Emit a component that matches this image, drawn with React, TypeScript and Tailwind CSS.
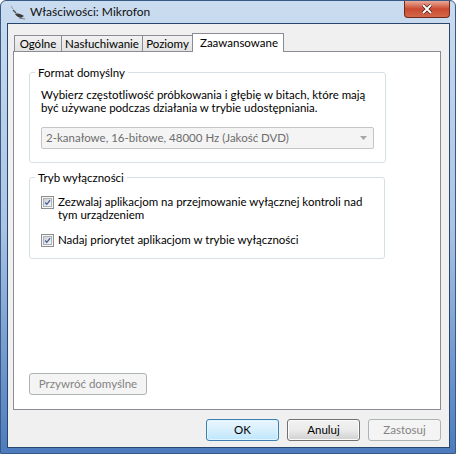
import React from "react";

function CheckBox() {
  return (
    <span className="mt-[1px] flex h-[13px] w-[13px] shrink-0 items-center justify-center border border-[#8e8f8f] bg-[#f4f4f4]">
      <span className="flex h-[9px] w-[9px] items-center justify-center border border-[#aeb3b9] bg-gradient-to-br from-[#cbcfd5] to-[#f6f6f6]">
        <svg width="9" height="9" viewBox="0 0 9 9">
          <path d="M1.5 4.5 L3.6 6.8 L7.8 1.6" fill="none" stroke="#4a5f97" strokeWidth="1.6" />
        </svg>
      </span>
    </span>
  );
}

function Group({ title, children }: { title: string; children: React.ReactNode }) {
  return (
    <fieldset className="w-[356px] rounded-[3px] border border-[#d5dfe5]">
      <legend className="ml-[5px] px-[3px] leading-[15px]">{title}</legend>
      {children}
    </fieldset>
  );
}

function Tab({ label, width, active }: { label: string; width: string; active?: boolean }) {
  if (active) {
    return (
      <div className={`relative z-10 -mb-[1px] -ml-[1px] h-[19px] border border-b-0 border-[#898c95] bg-white pl-[7px] pt-[1px] leading-[15px] ${width}`}>
        {label}
      </div>
    );
  }
  return (
    <div className={`-ml-[1px] h-[16px] border border-b-0 border-[#898c95] bg-gradient-to-b from-[#f2f2f2] to-[#e3e3e3] text-center leading-[15px] first:ml-0 ${width}`}>
      {label}
    </div>
  );
}

export default function App() {
  return (
    <div
      className="flex h-[454px] w-[456px] flex-col overflow-hidden rounded-t-[6px] border border-[#3a5a86] bg-gradient-to-b from-[#cadcef] via-[#a9c4e4] to-[#4c7bbd] text-[11.5px] text-black"
      style={{ fontFamily: "Lato, 'Noto Sans', sans-serif" }}
    >
      {/* title bar */}
      <div className="flex h-[22px] shrink-0 items-start">
        <div className="ml-[9px] mt-[4px] h-[16px] w-[16px]">
          <svg width="16" height="16" viewBox="0 0 16 16">
            <path d="M1 1 L3 4" stroke="#9a9a9a" strokeWidth="1" />
            <path d="M3 5 L6 8" stroke="#555" strokeWidth="1.4" />
            <path d="M5 9 C8 8 11 9 14 11 L11 13 C8 12 6 11 5 9 Z" fill="#3c3c3c" />
            <path d="M9 13 L15 14" stroke="#7a7a7a" strokeWidth="1" />
          </svg>
        </div>
        <div className="ml-[4px] mt-[3px] text-[12px] leading-[15px] text-[#111]">Właściwości: Mikrofon</div>
        <div className="ml-auto mr-[5px] flex h-[17px] w-[46px] items-center justify-center rounded-b-[4px] border border-t-0 border-[#6e2a1f] bg-gradient-to-b from-[#e9a899] via-[#c9492f] to-[#d4684c]">
          <svg width="12" height="10" viewBox="0 0 12 10">
            <path d="M2 1 L10 9 M10 1 L2 9" stroke="#3a1510" strokeWidth="3.2" />
            <path d="M2 1 L10 9 M10 1 L2 9" stroke="#ffffff" strokeWidth="2" />
          </svg>
        </div>
      </div>

      <div className="flex min-h-0 flex-1">
        <div className="w-[6px] shrink-0" />
        {/* client area */}
        <div className="flex flex-1 flex-col border border-[#29466e] bg-[#f0f0f0] pb-[6px] pl-[5px] pr-[8px] pt-[8px]">
          <div className="flex h-[19px] items-end pl-[1px]">
            <Tab label="Ogólne" width="w-[48px]" />
            <Tab label="Nasłuchiwanie" width="w-[82px]" />
            <Tab label="Poziomy" width="w-[51px]" />
            <Tab label="Zaawansowane" width="w-[92px]" active />
          </div>
          <div className="flex h-[360px] flex-col border border-[#898c95] bg-white px-[15px] pb-[14px] pt-[13px]">
            <Group title="Format domyślny">
              <div className="px-[11px] pb-[13px] pt-[8px]">
                <p className="leading-[13px]">
                  Wybierz częstotliwość próbkowania i głębię w bitach, które mają być używane podczas działania w trybie udostępniania.
                </p>
                <div className="mt-[13px] flex h-[22px] w-[333px] items-center rounded-[2px] border border-[#c5c5c5] bg-[#f4f4f4] pl-[4px] pr-[6px] text-[#6d6d6d]">
                  <span className="flex-1">2-kanałowe, 16-bitowe, 48000 Hz (Jakość DVD)</span>
                  <svg width="7" height="4" viewBox="0 0 7 4">
                    <path d="M0 0 L7 0 L3.5 4 Z" fill="#a6a6a6" />
                  </svg>
                </div>
              </div>
            </Group>
            <div className="mt-[7px]">
              <Group title="Tryb wyłączności">
                <div className="flex flex-col gap-[12px] pb-[11px] pl-[11px] pr-[8px] pt-[10px]">
                  <label className="flex items-start gap-[4px] leading-[13px]">
                    <CheckBox />
                    <span>Zezwalaj aplikacjom na przejmowanie wyłącznej kontroli nad tym urządzeniem</span>
                  </label>
                  <label className="flex items-start gap-[4px] leading-[13px]">
                    <CheckBox />
                    <span>Nadaj priorytet aplikacjom w trybie wyłączności</span>
                  </label>
                </div>
              </Group>
            </div>
            <div className="mt-auto flex">
              <button className="h-[22px] w-[118px] rounded-[3px] border border-[#adb2b5] bg-[#f4f4f4] text-[#838383]">
                Przywróć domyślne
              </button>
            </div>
          </div>
          <div className="mt-[9px] flex justify-end gap-[8px]">
            <button className="h-[22px] w-[73px] rounded-[3px] border border-[#3c7fb1] bg-gradient-to-b from-[#eaf6fd] via-[#d7effc] to-[#bee6fd] shadow-[inset_0_0_0_1px_#e3f5fc]">
              OK
            </button>
            <button className="h-[22px] w-[73px] rounded-[3px] border border-[#707070] bg-gradient-to-b from-[#f2f2f2] via-[#ebebeb] to-[#cfcfcf] shadow-[inset_0_0_0_1px_#fbfbfb]">
              Anuluj
            </button>
            <button className="h-[22px] w-[73px] rounded-[3px] border border-[#adb2b5] bg-[#f4f4f4] text-[#838383]">
              Zastosuj
            </button>
          </div>
        </div>
        <div className="w-[5px] shrink-0" />
      </div>
      <div className="h-[5px] shrink-0" />
    </div>
  );
}
